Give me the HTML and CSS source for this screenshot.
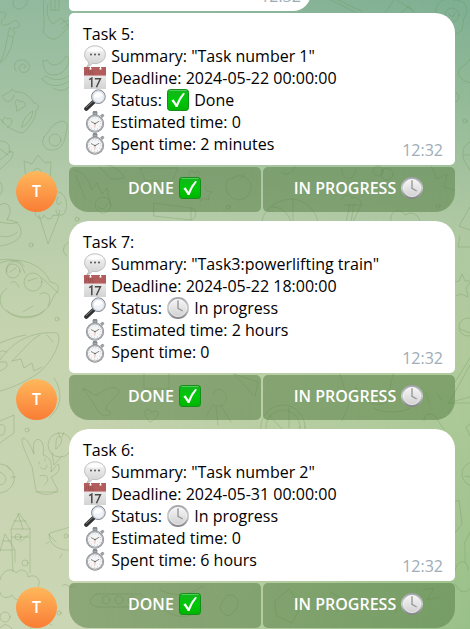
FILE: index.html
```html
<!DOCTYPE html>
<html lang="en">
<head>
<meta charset="utf-8">
<meta name="viewport" content="width=device-width, initial-scale=1">
<title>Task chat</title>
<link rel="stylesheet" href="styles.css">
</head>
<body>
<svg class="defs" aria-hidden="true">
  <defs>
    <linearGradient id="gSilver" x1="0" y1="0" x2="0" y2="1"><stop offset="0" stop-color="#f8f8f8"/><stop offset="1" stop-color="#cfcfcf"/></linearGradient>
    <linearGradient id="gRim" x1="0" y1="0" x2="0" y2="1"><stop offset="0" stop-color="#a3a3aa"/><stop offset=".5" stop-color="#cfcfd2"/><stop offset="1" stop-color="#85858a"/></linearGradient>
    <linearGradient id="gGreen" x1="0" y1="0" x2="0" y2="1"><stop offset="0" stop-color="#14b51d"/><stop offset=".5" stop-color="#00c808"/><stop offset="1" stop-color="#00b400"/></linearGradient>
    <linearGradient id="gPage" x1="0" y1="0" x2="0" y2="1"><stop offset="0" stop-color="#ececec"/><stop offset="1" stop-color="#d3d3d3"/></linearGradient>
  </defs>
  <symbol id="speech" viewBox="0 0 22 22">
    <path d="M11 .8C17 .8 21.400 4.500 21.400 9.600S17 18.600 11 18.600L8.400 18.400C7 20.200 5 21.400 2.600 21.600 4 20.400 4.700 18.800 4.600 17 2 15.300.6 12.800.6 9.800.6 4.600 5 .8 11 .8Z" fill="url(#gSilver)" stroke="#b4b4b4" stroke-width=".8"/>
    <path d="M3 6C4.500 3 7.500 2 11 2s6.500 1 8 4c-3 1-13 1-16 0Z" fill="#fff" opacity=".8"/>
    <g fill="#424242"><circle cx="7" cy="9.500" r=".9"/><circle cx="11" cy="9.500" r=".9"/><circle cx="15" cy="9.500" r=".9"/></g>
  </symbol>
  <symbol id="calendar" viewBox="0 0 22 22">
    <path d="M0 7h22v15H0Z" fill="url(#gPage)"/>
    <path d="M0 0h22v8.500H0Z" fill="#b25c5c"/>
    <path d="M0 8h22v.8H0Z" fill="#c99a9a"/>
    <path d="M2.500 3v3q-1 1.500-1.500 0M4.500 3v4h2V3M8.500 3v4h2" fill="none" stroke="#984a4a" stroke-width=".7"/>
    <circle cx="6.500" cy="1.800" r="1.200" fill="#e7c8c8"/><circle cx="16.500" cy="1.800" r="1.200" fill="#e7c8c8"/>
    <path d="M6.500 0v2M16.500 0v2" stroke="#fff"/>
    <path d="M5.200 12.600 7.800 11V20.200M10.800 11.700H16.400L12.400 20.200" fill="none" stroke="#4a4a4a" stroke-width="1.500"/>
  </symbol>
  <symbol id="glass" viewBox="0 0 22 22">
    <path d="M10 12.500 2.300 19.700" stroke="#303030" stroke-width="4.200" stroke-linecap="round"/>
    <path d="M9 12.400 2.200 18.600" stroke="#898989" stroke-width=".9" stroke-linecap="round"/>
    <circle cx="14.400" cy="7.700" r="6.800" fill="#eff3f8" stroke="#6c6c6c" stroke-width=".9"/>
    <circle cx="14.400" cy="7.700" r="5.700" fill="none" stroke="#cbd5e4" stroke-width=".9"/>
    <path d="M10 8.500a4.500 4.500 0 0 1 8.500-2.500q-3 3-8.500 2.500Z" fill="#fff"/>
  </symbol>
  <symbol id="stopwatch" viewBox="0 0 22 22">
    <path d="M9 1h4v3H9ZM16.700 4.300l2.300-1.100 1 1.500-2 1.700Z" fill="#a5a8ac" stroke="#7b7e82" stroke-width=".7"/>
    <path d="M9 .8h4" stroke="#7a7d82" stroke-width="1.200"/>
    <circle cx="11" cy="12.600" r="8.200" fill="#f6f6f6" stroke="#888c91" stroke-width="1.900"/>
    <circle cx="11" cy="12.600" r="8" fill="none" stroke="#c9ccd0" stroke-width=".7"/>
    <circle cx="11" cy="12.600" r="5.800" fill="none" stroke="#a0a0a0" stroke-width="1" stroke-dasharray=".5 2.537"/>
    <path d="m7 10.500 4 2.200 4.200-2.500" fill="none" stroke="#555" stroke-width=".7"/>
    <path d="m11 12.700-.2 3.800" stroke="#d9a09b" stroke-width=".7"/><circle cx="11" cy="12.600" r=".8" fill="#666"/>
  </symbol>
  <symbol id="check" viewBox="0 0 22 22">
    <rect x=".5" y=".5" width="21" height="21" rx="2.800" fill="url(#gGreen)" stroke="#168c1d"/>
    <path d="M2.500 1.500h17" stroke="#68d36c" stroke-width=".8"/>
    <path d="M4.400 11.700 6.400 10.300 9.500 14.700Q12.200 8.200 16.200 4.100L18 4.600Q13.200 10.500 10.500 18H8.700Q7 14.600 4.400 11.700Z" fill="#fff"/>
  </symbol>
  <symbol id="clock" viewBox="0 0 22 22">
    <circle cx="11" cy="11" r="10" fill="url(#gSilver)" stroke="url(#gRim)" stroke-width="2"/>
    <circle cx="11" cy="11" r="8.700" fill="none" stroke="#fff" stroke-width=".7" opacity=".7"/>
    <path d="M11 3.300V11.300L15.700 14" fill="none" stroke="#999" stroke-width="1.400"/>
  </symbol>
</svg>

<svg class="doodles" viewBox="0 0 470 629" preserveAspectRatio="xMinYMin slice" aria-hidden="true">
  <!-- left edge -->
  <path d="M0 12c5-1 8 2 4 6s-4 8 2 7 8-7 12-3-2 8-5 6M14 0c-3 5 1 10 6 9s8-6 7-9M10 28l5 4-2 6-5-3ZM8 36C5 46 5 54 0 62M13 39c-1 8-6 20-13 24"/>
  <path d="M44 0c-2 12 2 22-1 32 5 7 12 10 18 3l8-9-8-8-8 6c-6-6-7-12-5-20M51 0v10M55 0v10M59 0v9M51 10h8M61 24c3-4 8-4 9-1l-7 5"/>
  <path d="M16 71c-4-6 0-12 7-11s9 10 3 12-9-4-5-7 6 3 3 3"/>
  <path d="M43 61l4-1c5 8 13 6 19-4l3 2c0 10-7 17-16 17-6 0-10-5-10-14ZM42 79l4-3c8 5 16 5 24-1M42 79c6 8 18 9 27 2M53 88c6 4 12 3 16-1"/>
  <path d="M2 96l9-5c0-3 3-2 4 1 9-1 14 4 19 11 4 0 7 5 2 7 0 9-6 16-13 23-9-1-17-7-23-14M16 105c-3-5 3-7 4-3 4-2 7 2 4 5l-7 4ZM3 123c-2-5 3-7 4-4 5-2 6 2 4 5l-4 4M22 127c0-6 5-13 11-16-1 7-5 13-11 16M3 97c1 5 8 8 11-2"/>
  <path d="M44 137c5-4 7-14 18-16 9 1 4 10 3 17-2 8-7 13-15 12-7-2-9-7-6-13Z"/><circle cx="55" cy="140" r="6"/>
  <path d="M0 141c7-1 11 5 9 11l4 0c1 6-7 12-13 17M0 149l8 6M0 160l11-9M0 182c4 4 2 12 0 13"/>
  <path d="M26 180l-2-19 8 3 6-9 7 8 6-1-1 21M33 175c0-9 8-9 9 0"/>
  <path d="M39 215l9 29 11-28M35 212c0 7 9 8 9 3 4 7 9 3 9 0 6 2 8-2 6-5M53 192c12-3 17 12 11 22-5 3-8 0-8-4M58 197c-3 5 0 11 3 5"/>
  <circle cx="31" cy="245" r="2"/><circle cx="77" cy="219" r="2"/><circle cx="57" cy="319" r="2"/><circle cx="27" cy="430" r="2"/><circle cx="59" cy="613" r="2"/>
  <path d="M0 205c6-4 11 0 10 8l-3 7c9 0 15 5 14 14-2 7-12 11-21 12M0 222c8 2 14 2 18 0M0 236c7 2 14 0 17-4M69 242c-6 3-8 10-2 14"/>
  <circle cx="13" cy="271" r="7"/><circle cx="33" cy="282" r="9"/><path d="M0 260c10-2 20 0 24 6M7 272c-2-10 8-14 14-7l4 8M0 263c20-8 44 2 50 19 9 1 11 7 5 12l-6 12c-12 16-34 15-46 2-5-8-3-15 4-20M42 278l16 15M40 294c7-4 13 2 8 12M23 312l10-6M10 272l6-4M28 281l9-3M11 283c4-4 6 1 8 4"/>
  <path d="M0 360C14 339 35 331 57 333c7 7-6 31-20 41-12 8-25 14-37 17M12 361c9-8 20-23 28-26M12 361l9-2 3 9 8-5 2 8 8-4M7 352c-6-3-9 0-7 4M0 371c6-3 9-5 6-9H0M47 335l6 7M0 343c9-4 19-7 26-8"/>
  <path d="M7 310c5 9 32 9 37 0M54 378c10 15 7 30-5 40"/>
  <path d="M0 421l14-6v18L0 443M0 425c5-2 7 3 3 10H0M0 464c18 1 20 26 0 29M0 472c8 3 8 12 0 13M7 466l3 4M11 477h5"/>
  <circle cx="60" cy="445" r="12"/><path d="M52 453l2 12 7-8M56 443c0-7 3-8 6-4-1 5-3 8-6 10ZM60 437l-2-5M62 437l2-5"/>
  <path d="M32 467c-8-18-12-26-9-29 5 1 8 9 11 16-2-13 2-16 6-14 4 3 4 10 3 15 8 2 9 9 8 17 4-4 7-11 8-6 1 5-3 9-8 11l7 13c-8 7-19 5-22 0ZM39 462v2M45 459v2M40 467c4 4 7 2 7-2M40 476c8-3 11 4 4 9M36 492h22"/>
  <path d="M13 572l-2-43 8-16 11 16v44M12 529h18M14 521h12M18 514l5 15M12 537h17M20 542l8-7M0 551l5-17 10 16v12M0 550h14M3 541h8"/><circle cx="18" cy="537" r="3"/><circle cx="25" cy="563" r="3"/>
  <path d="M0 580c2-10 12-13 16-7 6-6 12-2 12 4 8-4 14 3 10 10l-6 8c-9 8-17 6-20 0-5 5-12 2-12-3M70 527l-20 6c-3 8 6 18 20 17M48 534l8 8M49 542l-3 2M62 554l-2 4"/>
  <circle cx="66" cy="536" r="2"/><circle cx="5" cy="617" r="5"/><path d="M0 628c4-5 8-4 12 1M30 629c6-9 13-9 22-4M62 586c5-5 7 4 12 0"/>
  <!-- gaps between messages and under the buttons -->
  <path d="M74 170c10 2 15 10 18 20l5-7 5 11 5-6 3 16M76 176l10 24M99 167c8 5 9 14 17 12l9-1c-5-8-12-13-22-14M145 180l-5-12h38l-6 13ZM154 203l37 5v12l-37-4ZM191 208c7 0 6 11 0 12M195 173c-4-6-10 1-1 8 10-8 3-14 1-8M205 187l2 4 5 1-4 4 1 4-5-2-4 3 0-5"/>
  <circle cx="103" cy="205" r="8"/><path d="M97 206c5 5 9 3 10-2M233 178c7-6 19 0 18 10-2 12-14 16-22 7-6-7-2-19 4-17ZM241 178l4-5"/>
  <path d="M262 221c2-12 15-22 31-22 14 2 23 11 25 24M271 207c10-1 18 6 20 16M293 199v24M281 172c6 5 13 0 14-6M342 168c-2 14 14 14 14 0M342 200c-1-5 8-7 10-2 5-2 10 2 9 7l-8 17M344 205h17M350 204l-4 18M354 204l-3 18M391 221c-2-10 10-14 14-6 9-5 13 1 15 6M431 166l6 13 10-5-3 13 10 3"/>
  <circle cx="387" cy="174" r="6"/><circle cx="378" cy="171" r="5"/><circle cx="438" cy="206" r="2"/><circle cx="228" cy="207" r="2"/>
  <path d="M83 389c8 0 9 9 16 5 8-8 23-9 19 0-5 6-12 9-12 16 9 2 3 8-4 5-5-4-8-13-19-26ZM213 394c4-9 15-4 13 6-1 7-10 8-14 4M212 406l-6 11M216 407l2 18M221 406l10 16M234 374l24 8-3 14ZM144 374v15h25v-15"/>
  <path d="M152 412c-5-7-12 1-2 10 12-6 10-14 2-10Z"/>
  <circle cx="283" cy="427" r="22"/><circle cx="283" cy="427" r="17"/><path d="M268 414l26 28M289 408v20M340 374l9 30-7 17M355 386c8 16 19 22 32 16l6-28M374 408c9 6 28 5 36 0M424 421c0-10 11-9 14 0l6 8M426 393l3 10M437 393l5 7M449 403l21-38M448 403l22 0"/>
  <path d="M96 594h45q12 8 0 13H96q-12-5 0-13Z"/><circle cx="106" cy="600" r="4"/><circle cx="119" cy="600" r="4"/><circle cx="132" cy="600" r="4"/>
  <path d="M160 590c17 8 31 5 43-4M162 606c8 14 33 14 41 0M224 599c6-10 19 0 12 10-6 12-16 5-16-2ZM275 601l14-12 12 17-9 17-15-7ZM330 592l14 8-7 12M377 607c4-12 20-10 19 6M423 590l11-2-7 12 12-3"/>
  <!-- top and right edge -->
  <path d="M331 0l24 12M338 0l23 11M385 13l9-13M401 13l8-7 6 7M397 0l15 10M436 13c-1-10 7-16 18-13 11 0 17 8 10 18l-2 12-7 5"/>
  <circle cx="452" cy="15" r="7"/><circle cx="465" cy="121" r="2"/><path d="M449 14c2 4 5 3 6-1M456 93c6 2 2 9-1 9M470 59c-3 8-16 8-10 18 4 5 8 5 12 6M470 142c-8 4-8 11-6 18l6 10M464 155h6"/>
  <path d="M470 207l-11 19 11 4M460 236l-2 11 12 0M455 282l4-1 3-7 3 7 6 0-5 7 2 9-7-3-5 2"/><circle cx="468" cy="327" r="9"/><path d="M460 329l10 4M455 382l15-24M455 401l15-4M470 424l-4 3 4 9"/><circle cx="474" cy="474" r="12"/><path d="M465 476l5 1M455 502l4-2 3 24-7 9M464 544l6-12M465 544v18M455 570c3-11 13-11 13 0M455 584c5 10 11 9 15 5"/>
</svg>

<main class="chat">
  <article class="message previous">
    <div class="bubble"><time class="time">12:32</time></div>
  </article>

  <article class="message joined">
    <span class="avatar">T</span>
    <div class="content">
      <div class="bubble">
        <p class="text">Task 5:<br>
          <svg class="icon"><use href="#speech"/></svg> Summary: "Task number 1"<br>
          <svg class="icon"><use href="#calendar"/></svg> Deadline: 2024-05-22 00:00:00<br>
          <svg class="icon"><use href="#glass"/></svg> Status: <svg class="icon"><use href="#check"/></svg> Done<br>
          <svg class="icon"><use href="#stopwatch"/></svg> Estimated time: 0<br>
          <svg class="icon"><use href="#stopwatch"/></svg> Spent time: 2 minutes</p>
        <time class="time">12:32</time>
      </div>
      <div class="actions">
        <button type="button" class="action">DONE <svg class="icon"><use href="#check"/></svg></button>
        <button type="button" class="action">IN PROGRESS <svg class="icon"><use href="#clock"/></svg></button>
      </div>
    </div>
  </article>

  <article class="message">
    <span class="avatar">T</span>
    <div class="content">
      <div class="bubble">
        <p class="text">Task 7:<br>
          <svg class="icon"><use href="#speech"/></svg> Summary: "Task3:powerlifting train"<br>
          <svg class="icon"><use href="#calendar"/></svg> Deadline: 2024-05-22 18:00:00<br>
          <svg class="icon"><use href="#glass"/></svg> Status: <svg class="icon"><use href="#clock"/></svg> In progress<br>
          <svg class="icon"><use href="#stopwatch"/></svg> Estimated time: 2 hours<br>
          <svg class="icon"><use href="#stopwatch"/></svg> Spent time: 0</p>
        <time class="time">12:32</time>
      </div>
      <div class="actions">
        <button type="button" class="action">DONE <svg class="icon"><use href="#check"/></svg></button>
        <button type="button" class="action">IN PROGRESS <svg class="icon"><use href="#clock"/></svg></button>
      </div>
    </div>
  </article>

  <article class="message">
    <span class="avatar">T</span>
    <div class="content">
      <div class="bubble">
        <p class="text">Task 6:<br>
          <svg class="icon"><use href="#speech"/></svg> Summary: "Task number 2"<br>
          <svg class="icon"><use href="#calendar"/></svg> Deadline: 2024-05-31 00:00:00<br>
          <svg class="icon"><use href="#glass"/></svg> Status: <svg class="icon"><use href="#clock"/></svg> In progress<br>
          <svg class="icon"><use href="#stopwatch"/></svg> Estimated time: 0<br>
          <svg class="icon"><use href="#stopwatch"/></svg> Spent time: 6 hours</p>
        <time class="time">12:32</time>
      </div>
      <div class="actions">
        <button type="button" class="action">DONE <svg class="icon"><use href="#check"/></svg></button>
        <button type="button" class="action">IN PROGRESS <svg class="icon"><use href="#clock"/></svg></button>
      </div>
    </div>
  </article>
</main>
</body>
</html>
```
FILE: styles.css
```css
* { box-sizing: border-box; }

body {
  margin: 0;
  height: 100vh;
  overflow: hidden;
  position: relative;
  isolation: isolate;
  font: 16px/22px "Open Sans", "Noto Sans", sans-serif;
  color: #000;
  background: linear-gradient(#92b99d 0%, #b6ccaa 32%, #c5d3af 52%, #cbd6b4 100%);
}

/* Cooler greens fade in towards the right edge */
body::before {
  content: "";
  position: absolute;
  inset: 0;
  z-index: -2;
  background: linear-gradient(#7eaf92 0%, #93ba97 16%, #aec8a2 36%, #b0ca9b 56%, #99c088 100%);
  mask-image: linear-gradient(90deg, transparent 15%, #000 100%);
}

.defs {
  position: absolute;
  width: 0;
  height: 0;
}

.doodles {
  position: absolute;
  inset: 0;
  z-index: -1;
  width: 100%;
  height: 100%;
  fill: none;
  stroke: rgba(100, 140, 75, .27);
  stroke-width: 1;
  stroke-linecap: round;
  stroke-linejoin: round;
}

.chat {
  display: flex;
  flex-direction: column;
  justify-content: flex-end;
  gap: 9px;
  height: 100%;
  padding: 0 15px 1px 16px;
}

.message {
  display: flex;
  align-items: flex-end;
  gap: 12px;
}

.content {
  flex: 1;
  display: flex;
  flex-direction: column;
  gap: 2px;
}

.avatar {
  flex: none;
  width: 41px;
  height: 41px;
  border-radius: 50%;
  background: linear-gradient(#ffb85c, #f97d35);
  color: #fff;
  font-weight: 600;
  line-height: 41px;
  text-align: center;
}

.bubble {
  display: flex;
  justify-content: space-between;
  align-items: flex-end;
  padding: 10px 12px 10px 14px;
  background: #fff;
  border-radius: 20px 20px 5px 5px;
}

.joined { margin-top: -7px; }
.joined .bubble { border-top-left-radius: 5px; }

.previous { padding-left: 53px; }
.previous .bubble {
  width: 242px;
  padding: 10px;
  justify-content: flex-end;
  border-radius: 5px 20px 20px 5px;
}

.text { margin: 0; }

.time {
  margin-bottom: -6px;
  color: #a0acb6;
}

.icon {
  width: 22px;
  height: 22px;
  margin: 0 1px;
  vertical-align: top;
}

.actions {
  display: grid;
  grid-template-columns: 1fr 1fr;
  gap: 2px;
}

.action {
  height: 45px;
  margin: 0;
  padding: 0 0 4px;
  border: 0;
  border-radius: 5px;
  background: rgba(84, 125, 68, .52);
  color: #fff;
  font: inherit;
  font-weight: 600;
  cursor: pointer;
}

.action:first-child { border-bottom-left-radius: 20px; }
.action:last-child { border-bottom-right-radius: 20px; }
```
